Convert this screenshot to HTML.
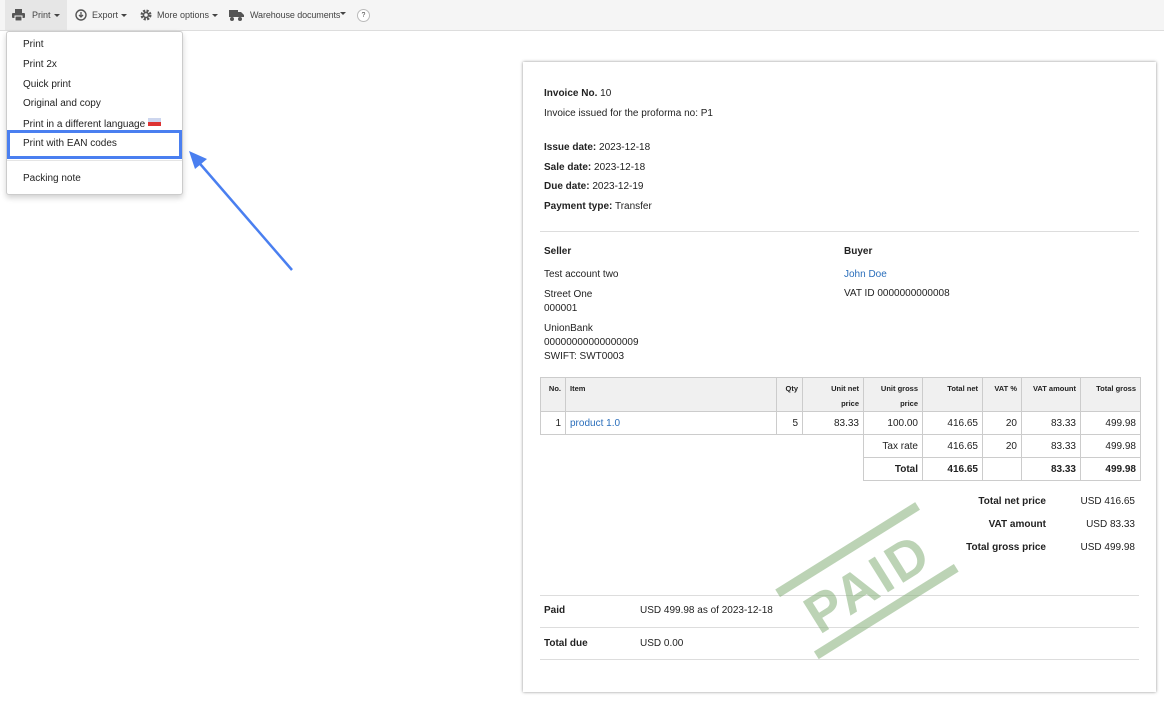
<!DOCTYPE html><html><head><style>
body{margin:0;width:1164px;height:707px;background:#fff;font-family:"Liberation Sans",sans-serif;font-size:11px;color:#222;position:relative;overflow:hidden}
.tb{position:absolute;left:0;top:0;width:1164px;height:30px;background:#f5f5f5;border-bottom:1px solid #ddd}
.tb span{position:absolute;top:10px;font-size:9px;color:#444}
.car{display:inline-block;border-left:3px solid transparent;border-right:3px solid transparent;border-top:3px solid #444;vertical-align:middle;margin-left:3px}
.menu{position:absolute;left:6px;top:31px;width:175px;height:162px;background:#fff;border:1px solid #ccc;border-radius:3px;box-shadow:0 3px 6px rgba(0,0,0,.18)}
.menu div{position:absolute;left:16px;font-size:10px;color:#222}
.a{position:absolute}
.page{position:absolute;left:523px;top:62px;width:633px;height:630px;background:#fff;box-shadow:0 0 3px rgba(0,0,0,.45)}
.t{position:absolute;font-size:10px;color:#222;white-space:nowrap}
b{font-weight:bold}
.hr{position:absolute;height:1px;background:#ddd}
table{position:absolute;left:17px;top:315px;border-collapse:collapse;font-size:10px}
td{border:1px solid #ccc;padding:0 4px;text-align:right;height:22px}
tr.h td{background:#f0f0f0;font-size:7.5px;font-weight:bold;vertical-align:top;padding-top:3px;height:28px;line-height:15px}
.nb{border:none}
.lk{color:#2a6ebb}
</style></head><body>
<div class="tb">
<div style="position:absolute;left:5px;top:0;width:62px;height:30px;background:#e6e6e6"></div>
<svg class="a" style="left:12px;top:9px" width="13" height="12" viewBox="0 0 13 12"><rect x="3" y="0" width="7" height="4" fill="#555"/><rect x="0" y="4" width="13" height="5" rx="1" fill="#555"/><rect x="3" y="7" width="7" height="5" fill="#555" stroke="#f5f5f5"/></svg>
<span style="left:32px">Print<i class="car"></i></span>
<svg class="a" style="left:75px;top:9px" width="12" height="12"><circle cx="6" cy="6" r="5" fill="none" stroke="#555" stroke-width="1.4"/><path d="M6 3v5M4 6l2 2 2-2" stroke="#555" fill="none" stroke-width="1.3"/></svg>
<span style="left:92px">Export<i class="car"></i></span>
<svg class="a" style="left:140px;top:9px" width="12" height="12"><circle cx="6" cy="6" r="4" fill="none" stroke="#555" stroke-width="3" stroke-dasharray="2 1.2"/><circle cx="6" cy="6" r="2.5" fill="none" stroke="#555" stroke-width="1.5"/></svg>
<span style="left:157px">More options<i class="car"></i></span>
<svg class="a" style="left:229px;top:10px" width="15" height="11"><rect x="0" y="0" width="9" height="7" fill="#555"/><path d="M9 2h3l3 3v2H9z" fill="#555"/><circle cx="3" cy="9" r="2" fill="#555"/><circle cx="11" cy="9" r="2" fill="#555"/></svg>
<span style="left:250px;letter-spacing:-0.1px">Warehouse documents</span><i class="car a" style="left:340px;top:12px;margin:0"></i>
<div style="position:absolute;left:357px;top:9px;width:11px;height:11px;border:1px solid #bbb;border-radius:50%;background:#fff;font-size:7px;text-align:center;line-height:11px;color:#444">?</div>
</div>
<div class="menu">
<div style="top:7px">Print</div><div style="top:27px">Print 2x</div><div style="top:47px">Quick print</div><div style="top:66px">Original and copy</div>
<div style="top:86px">Print in a different language <span style="display:inline-block;width:13px;height:8px;background:linear-gradient(#cdd6ee 50%,#d33 50%);vertical-align:1px"></span></div>
<div style="top:106px">Print with EAN codes</div>
<div style="left:0;top:128px;width:175px;height:1px;background:#e5e5e5"></div>
<div style="top:141px">Packing note</div>
</div>
<div class="a" style="left:7px;top:130px;width:175px;height:29px;border:3px solid #4a7ff0;box-sizing:border-box"></div>
<svg class="a" style="left:185px;top:150px" width="110" height="125"><line x1="107" y1="120" x2="10" y2="8" stroke="#4a7ff0" stroke-width="2.5"/><path d="M4 1L22 9L10 19Z" fill="#4a7ff0"/></svg>
<div class="page">
<div class="t" style="left:21px;top:26px"><b>Invoice No.</b> 10</div>
<div class="t" style="left:21px;top:46px">Invoice issued for the proforma no: P1</div>
<div class="t" style="left:21px;top:80px"><b>Issue date:</b> 2023-12-18</div>
<div class="t" style="left:21px;top:100px"><b>Sale date:</b> 2023-12-18</div>
<div class="t" style="left:21px;top:119px"><b>Due date:</b> 2023-12-19</div>
<div class="t" style="left:21px;top:139px"><b>Payment type:</b> Transfer</div>
<div class="hr" style="left:17px;top:169px;width:599px"></div>
<div class="t" style="left:21px;top:184px"><b>Seller</b></div>
<div class="t" style="left:321px;top:184px"><b>Buyer</b></div>
<div class="t" style="left:21px;top:207px">Test account two</div>
<div class="t lk" style="left:321px;top:207px">John Doe</div>
<div class="t" style="left:21px;top:226px;line-height:14px">Street One<br>000001</div>
<div class="t" style="left:321px;top:226px">VAT ID 0000000000008</div>
<div class="t" style="left:21px;top:260px;line-height:14px">UnionBank<br>00000000000000009<br>SWIFT: SWT0003</div>
<table>
<tr class="h"><td style="width:16px">No.</td><td style="width:202px;text-align:left">Item</td><td style="width:17px">Qty</td><td style="width:52px">Unit net<br>price</td><td style="width:50px">Unit gross<br>price</td><td style="width:51px">Total net</td><td style="width:30px">VAT %</td><td style="width:50px">VAT amount</td><td style="width:51px">Total gross</td></tr>
<tr><td>1</td><td style="text-align:left" class="lk">product 1.0</td><td>5</td><td>83.33</td><td>100.00</td><td>416.65</td><td>20</td><td>83.33</td><td>499.98</td></tr>
<tr><td class="nb"></td><td class="nb"></td><td class="nb"></td><td class="nb" style="border-right:1px solid #ccc"></td><td>Tax rate</td><td>416.65</td><td>20</td><td>83.33</td><td>499.98</td></tr>
<tr style="font-weight:bold"><td class="nb"></td><td class="nb"></td><td class="nb"></td><td class="nb" style="border-right:1px solid #ccc"></td><td>Total</td><td>416.65</td><td></td><td>83.33</td><td>499.98</td></tr>
</table>
<div class="t" style="right:110px;top:434px"><b>Total net price</b></div><div class="t" style="right:21px;top:434px">USD 416.65</div>
<div class="t" style="right:110px;top:457px"><b>VAT amount</b></div><div class="t" style="right:21px;top:457px">USD 83.33</div>
<div class="t" style="right:110px;top:480px"><b>Total gross price</b></div><div class="t" style="right:21px;top:480px">USD 499.98</div>
<div class="hr" style="left:17px;top:533px;width:599px"></div>
<div class="t" style="left:21px;top:543px"><b>Paid</b></div><div class="t" style="left:117px;top:543px">USD 499.98 as of 2023-12-18</div>
<div class="hr" style="left:17px;top:565px;width:599px"></div>
<div class="t" style="left:21px;top:576px"><b>Total due</b></div><div class="t" style="left:117px;top:576px">USD 0.00</div>
<div class="hr" style="left:17px;top:597px;width:599px"></div>
<svg class="a" style="left:213px;top:420px" width="260" height="200" viewBox="0 0 260 200"><g transform="rotate(-32 130 98)" opacity="0.55"><rect x="48" y="58" width="165" height="9" fill="#86b07a"/><rect x="48" y="131" width="165" height="9" fill="#86b07a"/><text x="130" y="120" text-anchor="middle" font-family="Liberation Sans" font-weight="bold" font-size="54" fill="#86b07a" letter-spacing="3">PAID</text></g></svg>
</div>
</body></html>
